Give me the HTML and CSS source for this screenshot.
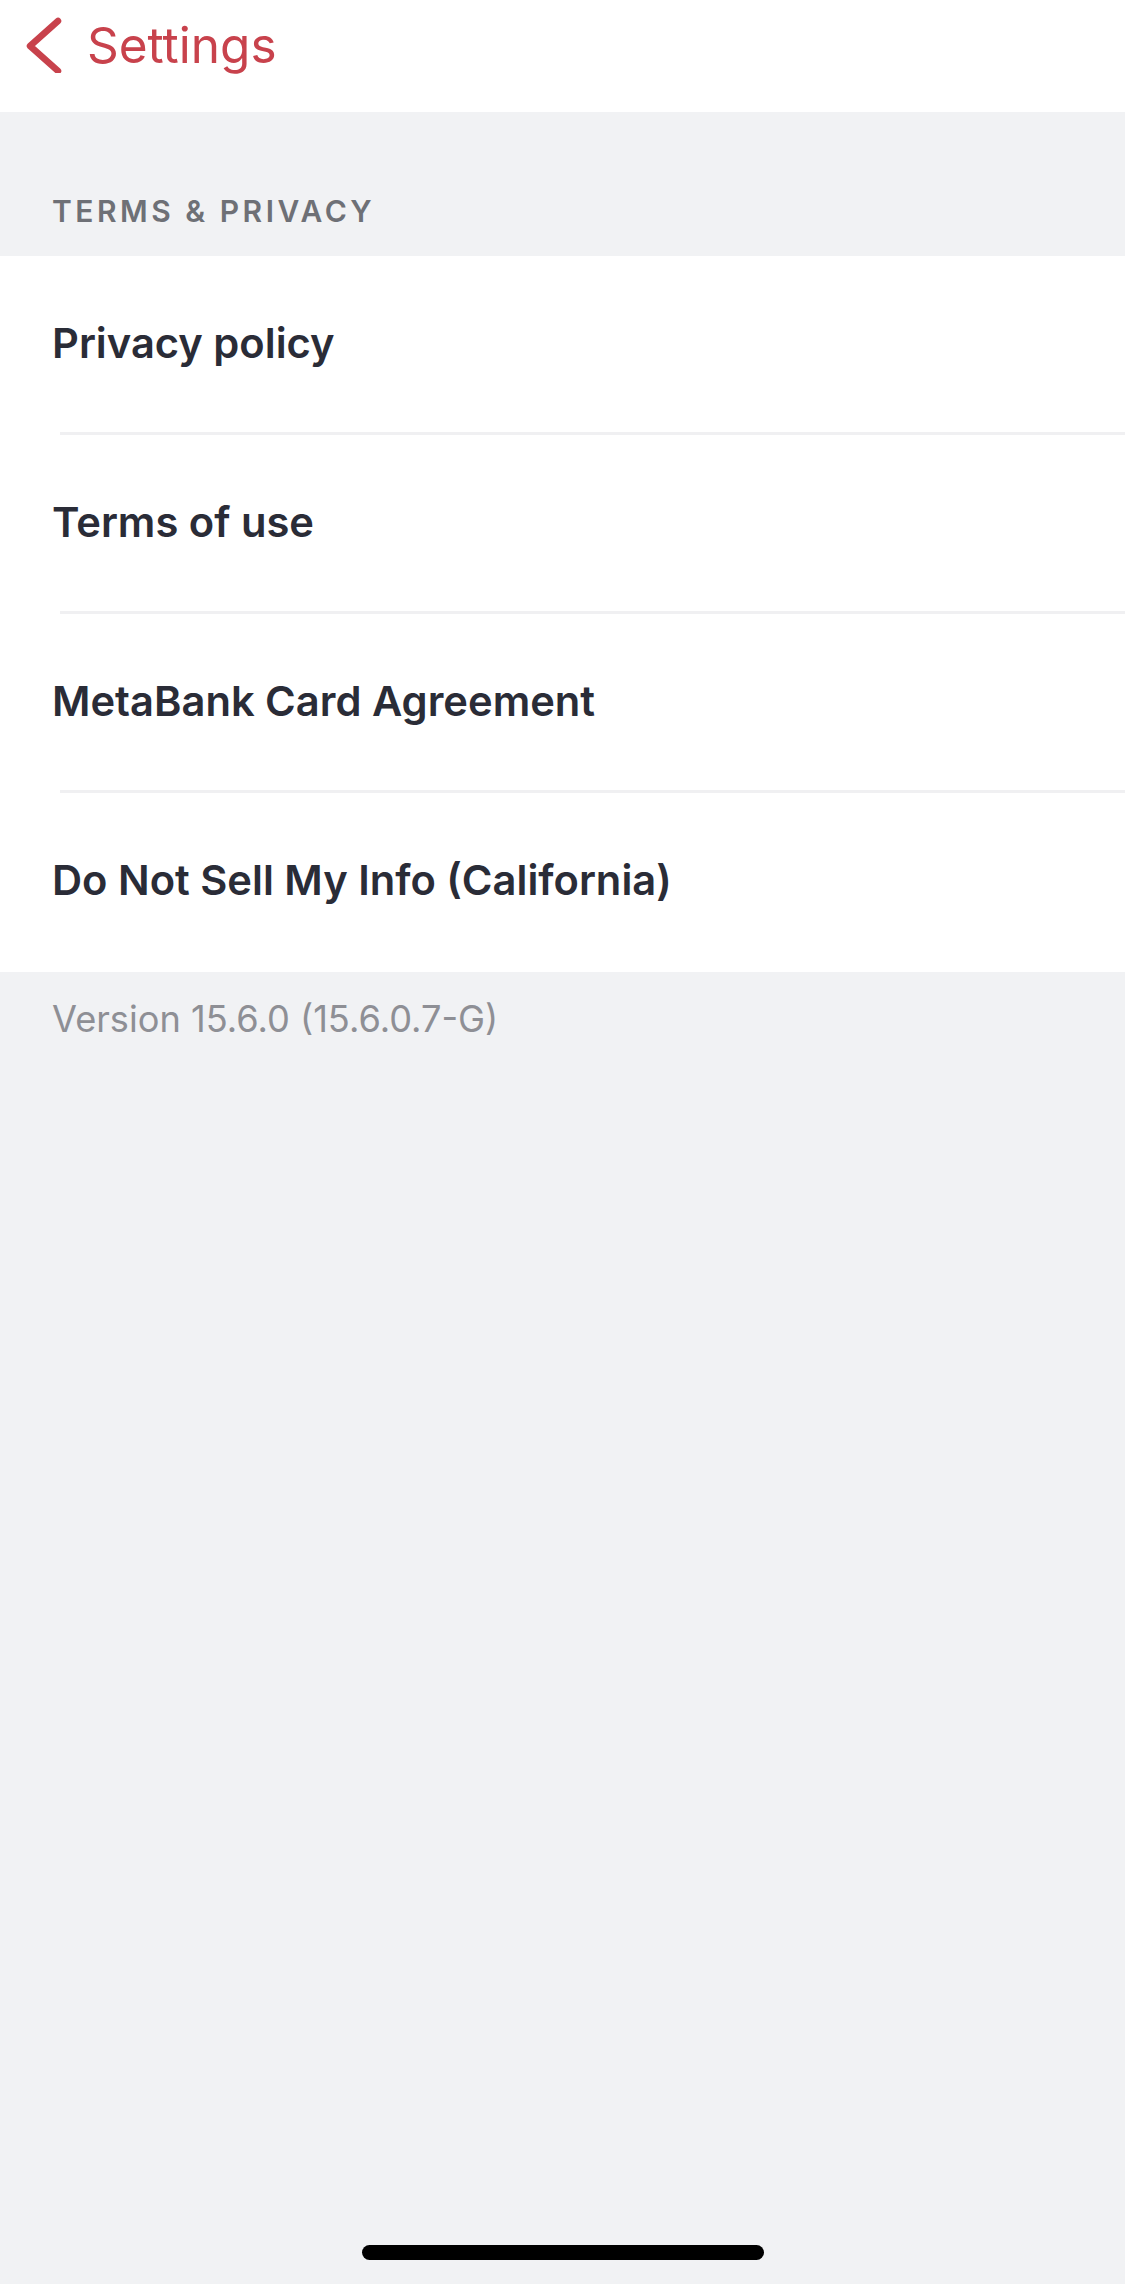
FILE: index.html
```html
<!DOCTYPE html>
<html lang="en">
<head>
    <meta charset="UTF-8">
    <meta name="viewport" content="width=device-width, initial-scale=1.0">
    <title>Terms &amp; Privacy</title>
    <link rel="stylesheet" href="styles.css">
</head>
<body>
    <header class="nav-bar">
        <a class="back-link" href="#">
            <svg class="back-icon" width="36" height="56" viewBox="0 0 36 56">
                <polyline points="32,4 4,29 32,54" fill="none" stroke="currentColor" stroke-width="6.5" stroke-linecap="round" stroke-linejoin="round"/>
            </svg>
            <span class="back-text">Settings</span>
        </a>
    </header>

    <div class="section-title">TERMS &amp; PRIVACY</div>

    <ul class="menu-list">
        <li class="menu-item">Privacy policy</li>
        <li class="menu-item">Terms of use</li>
        <li class="menu-item">MetaBank Card Agreement</li>
        <li class="menu-item">Do Not Sell My Info (California)</li>
    </ul>

    <p class="version">Version 15.6.0 (15.6.0.7-G)</p>

    <div class="home-indicator"></div>
</body>
</html>
```

FILE: styles.css
```css
* {
    box-sizing: border-box;
}
html, body {
    margin: 0;
    padding: 0;
}
body {
    position: relative;
    min-height: 2284px;
    background: #f1f2f4;
    font-family: Inter, "Noto Sans", Arial, sans-serif;
    color: #2a2c37;
}
.nav-bar {
    height: 112px;
    padding: 0 0 22px 26px;
    background: #ffffff;
    display: flex;
    align-items: center;
}
.back-link {
    display: flex;
    align-items: center;
    color: #c8424c;
    text-decoration: none;
}
.back-icon {
    display: block;
}
.back-text {
    margin-left: 25px;
    font-size: 49.5px;
    font-weight: 400;
}
.section-title {
    height: 144px;
    padding: 81px 0 0 52px;
    font-size: 30px;
    line-height: 36px;
    font-weight: 600;
    letter-spacing: 3.5px;
    color: #6e7076;
}
.menu-list {
    list-style: none;
    margin: 0;
    padding: 0;
    background: #ffffff;
}
.menu-item {
    position: relative;
    height: 179px;
    padding: 0 0 5px 52px;
    display: flex;
    align-items: center;
    font-size: 41.7px;
    font-weight: 600;
}
.menu-item::after {
    content: "";
    position: absolute;
    left: 60px;
    right: 0;
    bottom: 0;
    height: 3px;
    background: #f0f0f2;
}
.menu-item:last-child::after {
    display: none;
}
.version {
    margin: 0;
    padding: 26px 0 0 52px;
    font-size: 36.2px;
    line-height: 42px;
    color: #8e8f95;
}
.home-indicator {
    position: absolute;
    left: 362px;
    bottom: 24px;
    width: 402px;
    height: 15px;
    border-radius: 8px;
    background: #000000;
}
```
